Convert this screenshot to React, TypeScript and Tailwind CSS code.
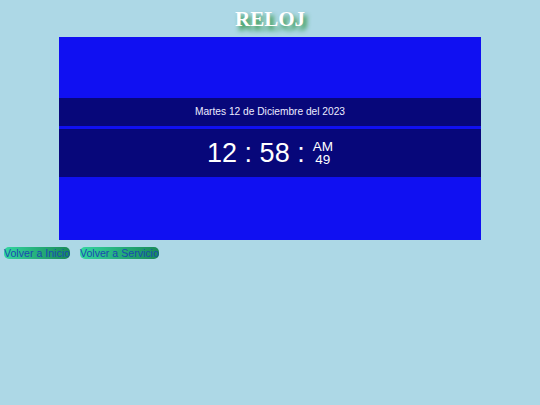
import React from 'react';

const App: React.FC = () => {
  return (
    <div className="min-h-[405px] w-full bg-[#add8e6] font-['Liberation_Sans',Arial,sans-serif]">
      {/* Title */}
      <h1 className="h-[37px] pt-[6px] text-center font-['Liberation_Serif',serif] text-[21px] font-bold leading-[26px] text-white [text-shadow:3px_4px_5px_#1a8a2a]">
        RELOJ
      </h1>

      {/* Clock box */}
      <div className="mx-auto flex h-[203px] w-[422px] flex-col bg-[#1010f2] pt-[61px]">
        <div className="flex h-[28px] items-center justify-center bg-[#07077a] text-[10.2px] text-[#ececff]">
          Martes 12 de Diciembre del 2023
        </div>
        <div className="h-[3px]" />
        <div className="flex h-[48px] items-center justify-center gap-[8px] bg-[#07077a] text-white">
          <span className="text-[27px] leading-none">12 : 58 :</span>
          <div className="flex flex-col items-center text-[13.5px] leading-[13.5px]">
            <span>AM</span>
            <span>49</span>
          </div>
        </div>
      </div>

      {/* Buttons */}
      <div className="mt-[7px] flex gap-[10px] pl-[4px]">
        <button className="rounded-[5px] bg-gradient-to-r from-[#33d6a0] to-[#188a58] text-[10.6px] leading-[12px] text-[#1a4ab0]">
          Volver a Inicio
        </button>
        <button className="rounded-[5px] bg-gradient-to-r from-[#33d6a0] to-[#188a58] text-[10.6px] leading-[12px] text-[#1a4ab0]">
          Volver a Servicio
        </button>
      </div>
    </div>
  );
};

export default App;
